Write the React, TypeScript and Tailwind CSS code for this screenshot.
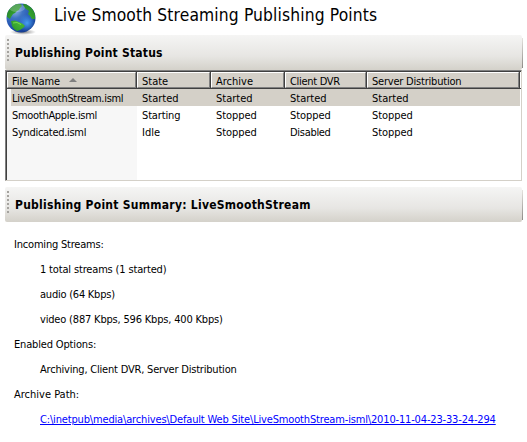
import React from "react";

const columns = [
  { name: "File Name", spacing: "tracking-[-0.1px]" },
  { name: "State", spacing: "tracking-normal" },
  { name: "Archive", spacing: "tracking-normal" },
  { name: "Client DVR", spacing: "tracking-[-0.3px]" },
  { name: "Server Distribution", spacing: "tracking-[-0.21px]" },
];
const rows = [
  ["LiveSmoothStream.isml", "Started", "Started", "Started", "Started"],
  ["SmoothApple.isml", "Starting", "Stopped", "Stopped", "Stopped"],
  ["Syndicated.isml", "Idle", "Stopped", "Disabled", "Stopped"],
];
const cellSpacing: Record<string, string> = {
  Started: "tracking-normal",
  Starting: "tracking-[-0.15px]",
  Stopped: "tracking-[-0.05px]",
  Disabled: "tracking-[-0.3px]",
  Idle: "tracking-normal",
};
const grid = "grid grid-cols-[130px_74px_74px_82px_153px]";

function Globe() {
  return (
    <svg width="34" height="35" viewBox="0 0 34 35" className="block">
      <defs>
        <radialGradient id="sea" cx="0.3" cy="0.25" r="0.85">
          <stop offset="0" stopColor="#8fb4e0" />
          <stop offset="0.3" stopColor="#3f74c4" />
          <stop offset="0.75" stopColor="#1b4bab" />
          <stop offset="1" stopColor="#123580" />
        </radialGradient>
        <radialGradient id="land" gradientUnits="userSpaceOnUse" cx="16" cy="18" r="17">
          <stop offset="0" stopColor="#4fc038" />
          <stop offset="0.6" stopColor="#33a02f" />
          <stop offset="1" stopColor="#2a8a2c" />
        </radialGradient>
        <radialGradient id="glow" cx="0.5" cy="0.5" r="0.5">
          <stop offset="0" stopColor="#4aa4f4" stopOpacity="0.95" />
          <stop offset="1" stopColor="#3f8fec" stopOpacity="0" />
        </radialGradient>
        <radialGradient id="shade" cx="0.5" cy="0.5" r="0.5">
          <stop offset="0" stopColor="#555" stopOpacity="0.8" />
          <stop offset="1" stopColor="#777" stopOpacity="0" />
        </radialGradient>
        <clipPath id="ball"><circle cx="15" cy="15" r="14.5" /></clipPath>
      </defs>
      <ellipse cx="17" cy="29" rx="13" ry="3" fill="url(#shade)" />
      <circle cx="15" cy="15" r="14.5" fill="url(#sea)" />
      <g clipPath="url(#ball)">
        <ellipse cx="21" cy="20" rx="9" ry="9" fill="url(#glow)" />
        <path d="M5 4 L9 1 L15 1 L16 3 L14 5 L13 7 L11 8 L9 10 L7 11 L5 14 L4 16 L1 14 L1 9Z" fill="url(#land)" />
        <path d="M17 1 L21 1 L26 5 L29 10 L29 16 L26 16 L24 13 L22 11 L23 8 L20 6 L18 4Z" fill="url(#land)" />
        <path d="M5 18 L9 17.5 L13 19 L17 21 L19 23 L17 25 L14 27 L11 28 L8 26 L6 23Z" fill="url(#land)" />
        <path d="M7 20 L11 19.5 L15 21.5" stroke="#75d850" strokeWidth="1" fill="none" />
        <ellipse cx="11" cy="5" rx="8" ry="4" fill="#fff" opacity="0.22" />
      </g>
    </svg>
  );
}

function Band({ children }: { children: React.ReactNode }) {
  return (
    <div className="flex h-[35px]">
      <div className="flex w-[517px] items-center rounded-[2px] bg-linear-to-b from-[#f5f5f4] via-[#e7e6e3] via-60% to-[#d4d1ca]">
        <div className="mt-[4px] ml-[2px] flex h-[22px] w-[2px] flex-col justify-between self-start">
          {[0, 1, 2, 3, 4, 5].map((i) => (
            <i key={i} className="h-[2px] w-[2px] bg-[#a5a39f]" />
          ))}
        </div>
        <h2 className="ml-[6px] text-[12px] leading-[16px] font-bold whitespace-nowrap">{children}</h2>
      </div>
      <div className="mt-[3px] h-[30px] w-px bg-linear-to-b from-[#e5e3de] to-[#8d8b87]" />
    </div>
  );
}

export default function App() {
  return (
    <main className="h-[442px] w-[527px] overflow-hidden bg-white pl-[5px] font-['DejaVu_Sans_Condensed','DejaVu_Sans',sans-serif] text-[11px] leading-[17px] text-black">
      <header className="flex h-[35px]">
        <div className="w-[49px] pt-[3px] pl-px"><Globe /></div>
        <h1 className="pt-[4px] text-[17.3px] leading-[22px] tracking-[0.14px] whitespace-nowrap">Live Smooth Streaming Publishing Points</h1>
      </header>
      <Band><span className="tracking-[0.21px]">Publishing Point Status</span></Band>
      <section className="h-[111px] w-[517px] border border-t-[#808080] border-r-[#d4d0c8] border-b-[#d4d0c8] border-l-[#808080]">
        <div className="h-[109px] border-t border-l border-[#404040] bg-[linear-gradient(to_right,#f7f7f7_130px,white_130px)]">
          <div className={grid + " h-[17px] border-b border-[#404040]"}>
            {columns.map((column, i) => (
              <div key={column.name} className="border-r border-[#404040]">
                <div className="flex h-[16px] items-center border border-t-white border-r-[#808080] border-b-[#808080] border-l-white bg-[#d4d0c8] pt-[2px] pl-[4px] whitespace-nowrap">
                  <span className={column.spacing}>{column.name}</span>
                  {i === 0 && (
                    <svg className="mb-[2px] ml-[9px]" width="8" height="4" viewBox="0 0 8 4"><path d="M4 0 8 4H0Z" fill="#808080" /></svg>
                  )}
                </div>
              </div>
            ))}
          </div>
          {rows.map((row, r) => (
            <div key={row[0]} className={r === 0 ? "ml-[4px] w-[509px] bg-[#d4d0c8]" : "ml-[4px] w-[509px]"}>
              <div className={grid + " -ml-[4px] h-[17px] pt-px"}>
                {row.map((cell, i) => (
                  <span key={i} className={"pl-[5px] whitespace-nowrap " + (cellSpacing[cell] ?? "tracking-[-0.3px]")}>{cell}</span>
                ))}
              </div>
            </div>
          ))}
        </div>
      </section>
      <div className="h-[6px]" />
      <Band><span className="tracking-[0.26px]">Publishing Point Summary: LiveSmoothStream</span></Band>
      <section className="mt-[10px] pl-[9px] leading-[25px] whitespace-nowrap">
        <p className="tracking-[-0.2px]">Incoming Streams:</p>
        <p className="pl-[26px] tracking-[-0.16px]">1 total streams (1 started)</p>
        <p className="pl-[26px] tracking-[-0.23px]">audio (64 Kbps)</p>
        <p className="pl-[26px] tracking-[-0.18px]">video (887 Kbps, 596 Kbps, 400 Kbps)</p>
        <p className="tracking-[-0.16px]">Enabled Options:</p>
        <p className="pl-[26px] tracking-[-0.2px]">Archiving, Client DVR, Server Distribution</p>
        <p>Archive Path:</p>
        <p className="pl-[26px]">
          <a href="#" className="tracking-[-0.16px] text-[#0000ff] underline">C:\inetpub\media\archives\Default Web Site\LiveSmoothStream-isml\2010-11-04-23-33-24-294</a>
        </p>
      </section>
    </main>
  );
}
